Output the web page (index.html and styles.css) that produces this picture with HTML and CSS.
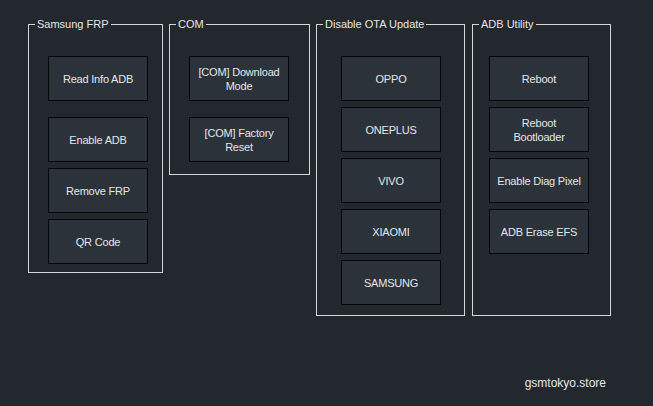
FILE: index.html
```html
<!DOCTYPE html>
<html lang="en">
<head>
<meta charset="utf-8">
<title>Tool</title>
<link rel="stylesheet" href="styles.css">
</head>
<body>
<div class="page">
  <div class="groups">
    <section class="group group-frp">
      <span class="group-label">Samsung FRP</span>
      <button class="btn btn-spaced">Read Info ADB</button>
      <button class="btn">Enable ADB</button>
      <button class="btn">Remove FRP</button>
      <button class="btn">QR Code</button>
    </section>
    <section class="group group-com">
      <span class="group-label">COM</span>
      <button class="btn btn-spaced">[COM] Download<br>Mode</button>
      <button class="btn">[COM] Factory<br>Reset</button>
    </section>
    <section class="group group-ota">
      <span class="group-label">Disable OTA Update</span>
      <button class="btn">OPPO</button>
      <button class="btn">ONEPLUS</button>
      <button class="btn">VIVO</button>
      <button class="btn">XIAOMI</button>
      <button class="btn">SAMSUNG</button>
    </section>
    <section class="group group-adb">
      <span class="group-label">ADB Utility</span>
      <button class="btn">Reboot</button>
      <button class="btn">Reboot<br>Bootloader</button>
      <button class="btn">Enable Diag Pixel</button>
      <button class="btn">ADB Erase EFS</button>
    </section>
  </div>
  <footer class="footer">gsmtokyo.store</footer>
</div>
</body>
</html>
```

FILE: styles.css
```css
* {
  box-sizing: border-box;
}

html, body {
  margin: 0;
  padding: 0;
  background: #23272e;
}

body {
  font-family: "Liberation Sans", Arial, sans-serif;
  color: #e4e6e8;
}

.page {
  width: 653px;
  height: 406px;
  display: flex;
  flex-direction: column;
}

.groups {
  display: flex;
  align-items: flex-start;
  gap: 6px;
  padding: 24px 0 0 28px;
}

.group {
  position: relative;
  border: 1px solid #d6d6d6;
  padding-top: 31px;
  display: flex;
  flex-direction: column;
  gap: 6px;
}

.group-frp { width: 135px; height: 249px; padding-left: 19px; }
.group-com { width: 141px; height: 151px; padding-left: 19px; }
.group-ota { width: 149px; height: 292px; padding-left: 24px; }
.group-adb { width: 139px; height: 292px; padding-left: 16px; margin-left: 1px; }

.group-label {
  position: absolute;
  top: -8px;
  left: 6px;
  padding: 0 2px;
  background: #23272e;
  font-size: 11px;
  line-height: 14px;
  white-space: nowrap;
}

.btn {
  width: 100px;
  height: 45px;
  flex: none;
  margin: 0;
  padding: 0 4px;
  background: #2c3239;
  border: 1px solid #050607;
  border-radius: 0;
  color: #e4e6e8;
  font-family: "Liberation Sans", Arial, sans-serif;
  font-size: 11px;
  line-height: 14px;
  letter-spacing: -0.2px;
  text-align: center;
}

.btn-spaced {
  margin-bottom: 10px;
}

.footer {
  margin-top: auto;
  padding: 0 47px 16px 0;
  text-align: right;
  font-size: 12px;
  line-height: 14px;
}
```
